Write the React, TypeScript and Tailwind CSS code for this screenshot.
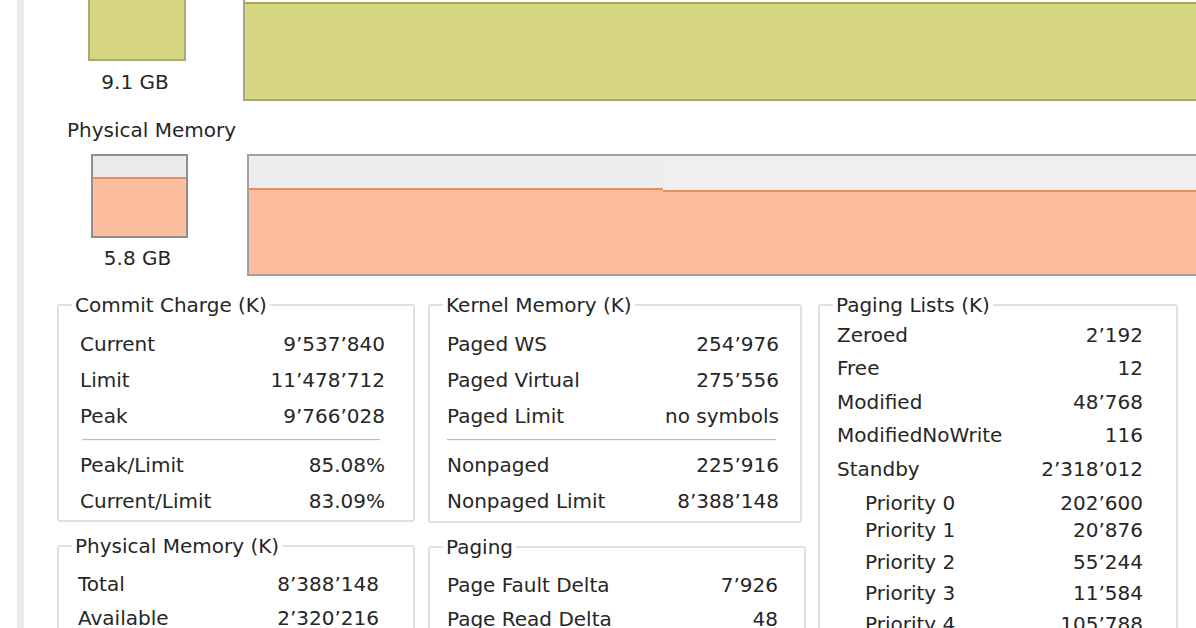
import React from "react";

type Row = { label: string; value: string };

function Rows({ rows }: { rows: Row[] }) {
  return (
    <>
      {rows.map((r) => (
        <div key={r.label} className="flex h-[36px] items-center justify-between">
          <span>{r.label}</span>
          <span>{r.value}</span>
        </div>
      ))}
    </>
  );
}

function Sep({ className }: { className: string }) {
  return (
    <div className={"flex flex-col " + className}>
      <div className="h-[1px] bg-[#bcbcbc]" />
      <div className="h-[1px] bg-[#f4f4f4]" />
    </div>
  );
}

function Title({ children }: { children: React.ReactNode }) {
  return (
    <div className="-mt-[13px] ml-[13px] w-fit bg-white px-[3px] leading-[24px]">{children}</div>
  );
}

export default function App() {
  const paging: { label: string; value: string; indent?: boolean; mt: string }[] = [
    { label: "Zeroed", value: "2’192", mt: "mt-[6px]" },
    { label: "Free", value: "12", mt: "mt-[9px]" },
    { label: "Modified", value: "48’768", mt: "mt-[10px]" },
    { label: "ModifiedNoWrite", value: "116", mt: "mt-[9px]" },
    { label: "Standby", value: "2’318’012", mt: "mt-[10px]" },
    { label: "Priority 0", value: "202’600", indent: true, mt: "mt-[10px]" },
    { label: "Priority 1", value: "20’876", indent: true, mt: "mt-[3px]" },
    { label: "Priority 2", value: "55’244", indent: true, mt: "mt-[8px]" },
    { label: "Priority 3", value: "11’584", indent: true, mt: "mt-[7px]" },
    { label: "Priority 4", value: "105’788", indent: true, mt: "mt-[7px]" },
  ];

  return (
    <div
      className="flex h-[628px] w-[1196px] overflow-hidden bg-white text-[20px] text-[#262626]"
      style={{ fontFamily: '"DejaVu Sans", Verdana, sans-serif' }}
    >
      <div className="w-[17px] shrink-0" />
      <div className="w-[7px] shrink-0 bg-[#ebebeb]" />
      <div className="flex min-w-0 flex-1 flex-col">
        {/* Commit history row */}
        <div className="-mt-[20px] flex">
          <div className="flex w-[219px] shrink-0 flex-col">
            <div className="ml-[64px] h-[81px] w-[98px] border-2 border-[#a7a77c] bg-[#d5d67f]" />
            <div className="ml-[62px] mt-[9px] w-[98px] text-center leading-[24px]">9.1 GB</div>
          </div>
          <div className="flex h-[121px] flex-1 flex-col border-b-2 border-l-2 border-[#a3a58a] bg-white">
            <div className="mt-[22px] flex-1 border-t-2 border-[#a8aa48] bg-[#d5d67f]" />
          </div>
        </div>

        {/* Physical memory row */}
        <div className="mt-[17px] flex">
          <div className="flex w-[223px] shrink-0 flex-col">
            <div className="pl-[43px] leading-[24px]">Physical Memory</div>
            <div className="ml-[67px] mt-[12px] flex h-[84px] w-[97px] flex-col border-2 border-[#8e8e8e] bg-[#fdbe9e]">
              <div className="h-[21px] bg-[#ebebeb]" />
              <div className="h-[2px] bg-[#eb8a5b]" />
            </div>
            <div className="ml-[65px] mt-[8px] w-[97px] text-center leading-[24px]">5.8 GB</div>
          </div>
          <div className="mt-[36px] flex h-[122px] flex-1 border-2 border-r-0 border-[#a0a0a0] bg-[#fdbd9b]">
            <div className="flex w-[414px] flex-col">
              <div className="h-[32px] bg-[#ededed]" />
              <div className="h-[2px] bg-[#ec8b5c]" />
            </div>
            <div className="flex flex-1 flex-col">
              <div className="h-[34px] bg-[#efeff2]" />
              <div className="h-[2px] bg-[#ec8b5c]" />
            </div>
          </div>
        </div>

        {/* Group boxes */}
        <div className="ml-[33px] mt-[28px] flex gap-[13px]">
          <div className="flex w-[358px] shrink-0 flex-col gap-[23px]">
            <div className="h-[218px] rounded-[3px] border-2 border-[#e0e0e0]">
              <Title>Commit Charge (K)</Title>
              <div className="pl-[21px] pr-[28px] pt-[9px]">
                <Rows
                  rows={[
                    { label: "Current", value: "9’537’840" },
                    { label: "Limit", value: "11’478’712" },
                    { label: "Peak", value: "9’766’028" },
                  ]}
                />
                <Sep className="ml-[2px] mr-[5px] mt-[5px] mb-[6px]" />
                <Rows
                  rows={[
                    { label: "Peak/Limit", value: "85.08%" },
                    { label: "Current/Limit", value: "83.09%" },
                  ]}
                />
              </div>
            </div>
            <div className="h-[120px] rounded-[3px] border-2 border-[#e0e0e0]">
              <Title>Physical Memory (K)</Title>
              <div className="pl-[19px] pr-[34px] pt-[8px]">
                <div className="flex h-[36px] items-center justify-between">
                  <span>Total</span>
                  <span>8’388’148</span>
                </div>
                <div className="flex h-[32px] items-center justify-between">
                  <span>Available</span>
                  <span>2’320’216</span>
                </div>
              </div>
            </div>
          </div>

          <div className="flex w-[378px] shrink-0 flex-col gap-[23px]">
            <div className="mr-[4px] h-[219px] rounded-[3px] border-2 border-[#e0e0e0]">
              <Title>Kernel Memory (K)</Title>
              <div className="pl-[17px] pr-[21px] pt-[9px]">
                <Rows
                  rows={[
                    { label: "Paged WS", value: "254’976" },
                    { label: "Paged Virtual", value: "275’556" },
                    { label: "Paged Limit", value: "no symbols" },
                  ]}
                />
                <Sep className="ml-[0px] mr-[3px] mt-[5px] mb-[6px]" />
                <Rows
                  rows={[
                    { label: "Nonpaged", value: "225’916" },
                    { label: "Nonpaged Limit", value: "8’388’148" },
                  ]}
                />
              </div>
            </div>
            <div className="h-[120px] rounded-[3px] border-2 border-[#e0e0e0]">
              <Title>Paging</Title>
              <div className="pl-[17px] pr-[26px] pt-[8px]">
                <div className="flex h-[36px] items-center justify-between">
                  <span>Page Fault Delta</span>
                  <span>7’926</span>
                </div>
                <div className="flex h-[32px] items-center justify-between">
                  <span>Page Read Delta</span>
                  <span>48</span>
                </div>
              </div>
            </div>
          </div>

          <div className="-ml-[1px] flex w-[360px] shrink-0 flex-col">
            <div className="h-[400px] rounded-[3px] border-2 border-[#e0e0e0]">
              <Title>Paging Lists (K)</Title>
              <div className="pl-[17px] pr-[33px]">
                {paging.map((p) => (
                  <div
                    key={p.label}
                    className={"flex items-center justify-between leading-[24px] " + p.mt}
                  >
                    <span className={p.indent ? "pl-[28px]" : ""}>{p.label}</span>
                    <span>{p.value}</span>
                  </div>
                ))}
              </div>
            </div>
          </div>
        </div>
      </div>
    </div>
  );
}
